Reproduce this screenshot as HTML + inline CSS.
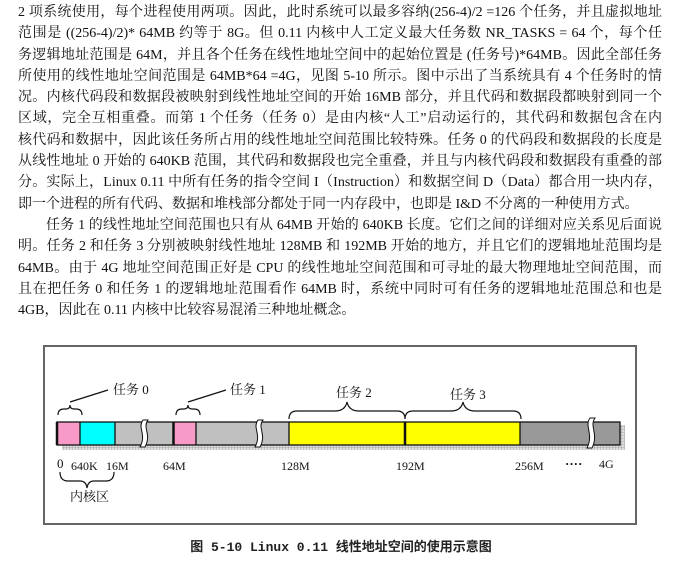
<!DOCTYPE html>
<html><head><meta charset="utf-8"><style>
body{margin:0;width:682px;height:567px;background:#fff;overflow:hidden;position:relative;font-family:"Liberation Serif","Noto Serif CJK SC",serif;color:#111}
.t{position:absolute;left:18px;width:644px;font-size:14px;line-height:21.3px;top:2px}
.t div{text-align:justify;text-align-last:justify;white-space:nowrap;height:21.3px;overflow:visible}
.t div.l{text-align-last:left}
.cap{position:absolute;top:536px;left:0;width:682px;text-align:center;font-size:13px;font-family:"Liberation Mono","Noto Sans CJK SC",monospace;font-weight:bold;color:#222}
</style></head><body>
<div class="t">
<div>2 项系统使用，每个进程使用两项。因此，此时系统可以最多容纳(256-4)/2 =126 个任务，并且虚拟地址</div>
<div>范围是 ((256-4)/2)* 64MB 约等于 8G。但 0.11 内核中人工定义最大任务数 NR_TASKS = 64 个，每个任</div>
<div>务逻辑地址范围是 64M，并且各个任务在线性地址空间中的起始位置是 (任务号)*64MB。因此全部任务</div>
<div>所使用的线性地址空间范围是 64MB*64 =4G，见图 5-10 所示。图中示出了当系统具有 4 个任务时的情</div>
<div>况。内核代码段和数据段被映射到线性地址空间的开始 16MB 部分，并且代码和数据段都映射到同一个</div>
<div>区域，完全互相重叠。而第 1 个任务（任务 0）是由内核“人工”启动运行的，其代码和数据包含在内</div>
<div>核代码和数据中，因此该任务所占用的线性地址空间范围比较特殊。任务 0 的代码段和数据段的长度是</div>
<div>从线性地址 0 开始的 640KB 范围，其代码和数据段也完全重叠，并且与内核代码段和数据段有重叠的部</div>
<div>分。实际上，Linux 0.11 中所有任务的指令空间 I（Instruction）和数据空间 D（Data）都合用一块内存，</div>
<div class="l">即一个进程的所有代码、数据和堆栈部分都处于同一内存段中，也即是 I&amp;D 不分离的一种使用方式。</div>
<div style="padding-left:28px">任务 1 的线性地址空间范围也只有从 64MB 开始的 640KB 长度。它们之间的详细对应关系见后面说</div>
<div>明。任务 2 和任务 3 分别被映射线性地址 128MB 和 192MB 开始的地方，并且它们的逻辑地址范围均是</div>
<div>64MB。由于 4G 地址空间范围正好是 CPU 的线性地址空间范围和可寻址的最大物理地址空间范围，而</div>
<div>且在把任务 0 和任务 1 的逻辑地址范围看作 64MB 时，系统中同时可有任务的逻辑地址范围总和也是</div>
<div class="l">4GB，因此在 0.11 内核中比较容易混淆三种地址概念。</div>
</div>
<svg style="position:absolute;left:0;top:0" width="682" height="567">
<defs><pattern id="h" width="3" height="3" patternUnits="userSpaceOnUse"><rect width="3" height="3" fill="#ddd"/><path d="M0 0H3M0 0V3" stroke="#999" stroke-width="0.8"/></pattern></defs>
<rect x="44" y="346" width="592" height="178" fill="none" stroke="#666" stroke-width="2"/>
<rect x="62" y="425" width="563" height="25" fill="url(#h)"/>
<rect x="57" y="422" width="23" height="23" fill="#f79ac8"/>
<rect x="80" y="422" width="35" height="23" fill="#00ffff"/>
<rect x="115" y="422" width="58" height="23" fill="#c0c0c0"/>
<rect x="174" y="422" width="22" height="23" fill="#f79ac8"/>
<rect x="196" y="422" width="93" height="23" fill="#c0c0c0"/>
<rect x="289" y="422" width="116" height="23" fill="#ffff00"/>
<rect x="405" y="422" width="115" height="23" fill="#ffff00"/>
<rect x="520" y="422" width="100" height="23" fill="#999"/>
<g fill="none" stroke="#111" stroke-width="1.3">
<rect x="57" y="422" width="563" height="23"/>
<path d="M80 422V445M115 422V445M196 422V445M289 422V445M520 422V445"/>
<path d="M57 422V445M173.5 422V445M405 422V445" stroke-width="2.5"/>
</g>
<g fill="#fff" stroke="#111" stroke-width="1">
<path d="M143 420c-6 8 4 14 -3 27h5c7-13-3-19 3-27z"/>
<path d="M258 420c-6 8 4 14 -3 27h5c7-13-3-19 3-27z"/>
<path d="M590 418c-6 8 4 16 -3 30h5c7-14-3-22 3-30z"/>
</g>
<g fill="none" stroke="#111" stroke-width="1.2">
<path d="M58 415q0-6 6-6h2q4 0 4-4q0 4 4 4h2q6 0 6 6"/>
<path d="M70 402L108 390"/>
<path d="M176 415q0-6 6-6h2q4 0 4-4q0 4 4 4h2q6 0 6 6"/>
<path d="M188 402L226 390"/>
<path d="M289 419q0-8 8-8h38q10 0 12-9q2 9 12 9h38q8 0 8 8"/>
<path d="M405 419q0-8 8-8h38q10 0 12-9q2 9 12 9h38q8 0 8 8"/>
<path d="M60 472q0 9 8 9h12q6 0 7 7q1-7 7-7h12q8 0 8-9"/>
</g>
<g font-family="Liberation Serif,'Noto Serif CJK SC',serif" font-size="13" fill="#111">
<text x="113" y="394">任务 0</text>
<text x="230" y="394">任务 1</text>
<text x="336" y="397">任务 2</text>
<text x="450" y="399">任务 3</text>
<text x="57" y="468">0</text>
<text x="71" y="470" font-size="12">640K</text>
<text x="106" y="470" font-size="12">16M</text>
<text x="163" y="470" font-size="12">64M</text>
<text x="281" y="470" font-size="12">128M</text>
<text x="396" y="470" font-size="12">192M</text>
<text x="515" y="470" font-size="12">256M</text>
<text x="565" y="468" font-weight="bold">····</text>
<text x="599" y="468" font-size="12">4G</text>
<text x="70" y="501">内核区</text>
</g>
</svg>
<div class="cap">图 5-10 Linux 0.11 线性地址空间的使用示意图</div>
</body></html>
